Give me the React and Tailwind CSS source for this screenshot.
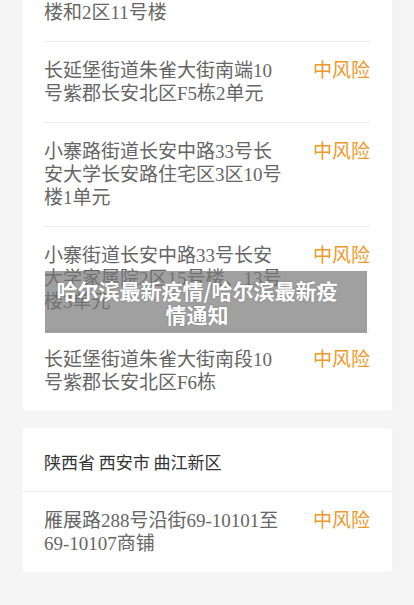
import React from 'react';

const firstCard = [
  { addr: '长延堡街道朱雀大街南段10号紫郡长安北区1栋楼和2区11号楼', risk: '中风险', hidden: true },
  { addr: '长延堡街道朱雀大街南端10号紫郡长安北区F5栋2单元', risk: '中风险' },
  { addr: '小寨路街道长安中路33号长安大学长安路住宅区3区10号楼1单元', risk: '中风险' },
  { addr: '小寨街道长安中路33号长安大学家属院2区15号楼、13号楼3单元', risk: '中风险' },
  { addr: '长延堡街道朱雀大街南段10号紫郡长安北区F6栋', risk: '中风险' },
];

const secondCard = [
  { addr: '雁展路288号沿街69-10101至69-10107商铺', risk: '中风险' },
];

function Row({ item, last }) {
  return (
    <div className={'flex justify-between items-start pt-[17px] pb-[17px] ' + (last ? '' : 'border-b border-[#ededed]')}>
      <p className="w-[241px] text-[19px] leading-[23px] text-[#666666]">
        {item.hidden ? (
          <>
            <span className="block">长延堡街道朱雀大街南段</span>
            <span className="block">楼和2区11号楼</span>
          </>
        ) : (
          item.addr
        )}
      </p>
      <span className="text-[19px] leading-[23px] text-[#f0982c]">{item.risk}</span>
    </div>
  );
}

export default function App() {
  return (
    <div
      className="relative h-[605px] w-[414px] overflow-hidden bg-[#f5f5f5]"
      style={{ fontFamily: '"Liberation Serif", "Noto Sans CJK SC", serif' }}
    >
      <div className="-mt-[39px] mx-[22px] bg-white rounded-[4px] shadow-[0_0_3px_rgba(0,0,0,0.04)] px-[22px]">
        {firstCard.map((item, i) => (
          <Row key={i} item={item} last={i === firstCard.length - 1} />
        ))}
      </div>

      <div className="mt-[17px] mx-[22px] bg-white rounded-[4px] shadow-[0_0_3px_rgba(0,0,0,0.04)]">
        <div className="px-[22px] pt-[22px] pb-[18px] border-b border-[#ededed]">
          <p className="text-[17px] leading-[23px] text-[#333333]" style={{ fontFamily: '"Noto Sans CJK SC", sans-serif' }}>
            陕西省 西安市 曲江新区
          </p>
        </div>
        <div className="px-[22px]">
          {secondCard.map((item, i) => (
            <Row key={i} item={item} last={i === secondCard.length - 1} />
          ))}
        </div>
      </div>

      <div className="absolute left-[45px] top-[271px] w-[322px] h-[62px] bg-[rgba(120,120,120,0.7)] pl-[10px] pr-[28px] py-[7px]">
        <p
          className="text-center text-white font-bold text-[21px] leading-[24px] [text-shadow:0_0_2px_rgba(0,0,0,0.25)]"
          style={{ fontFamily: '"Noto Sans CJK SC", sans-serif' }}
        >
          哈尔滨最新疫情/哈尔滨最新疫情通知
        </p>
      </div>
    </div>
  );
}
